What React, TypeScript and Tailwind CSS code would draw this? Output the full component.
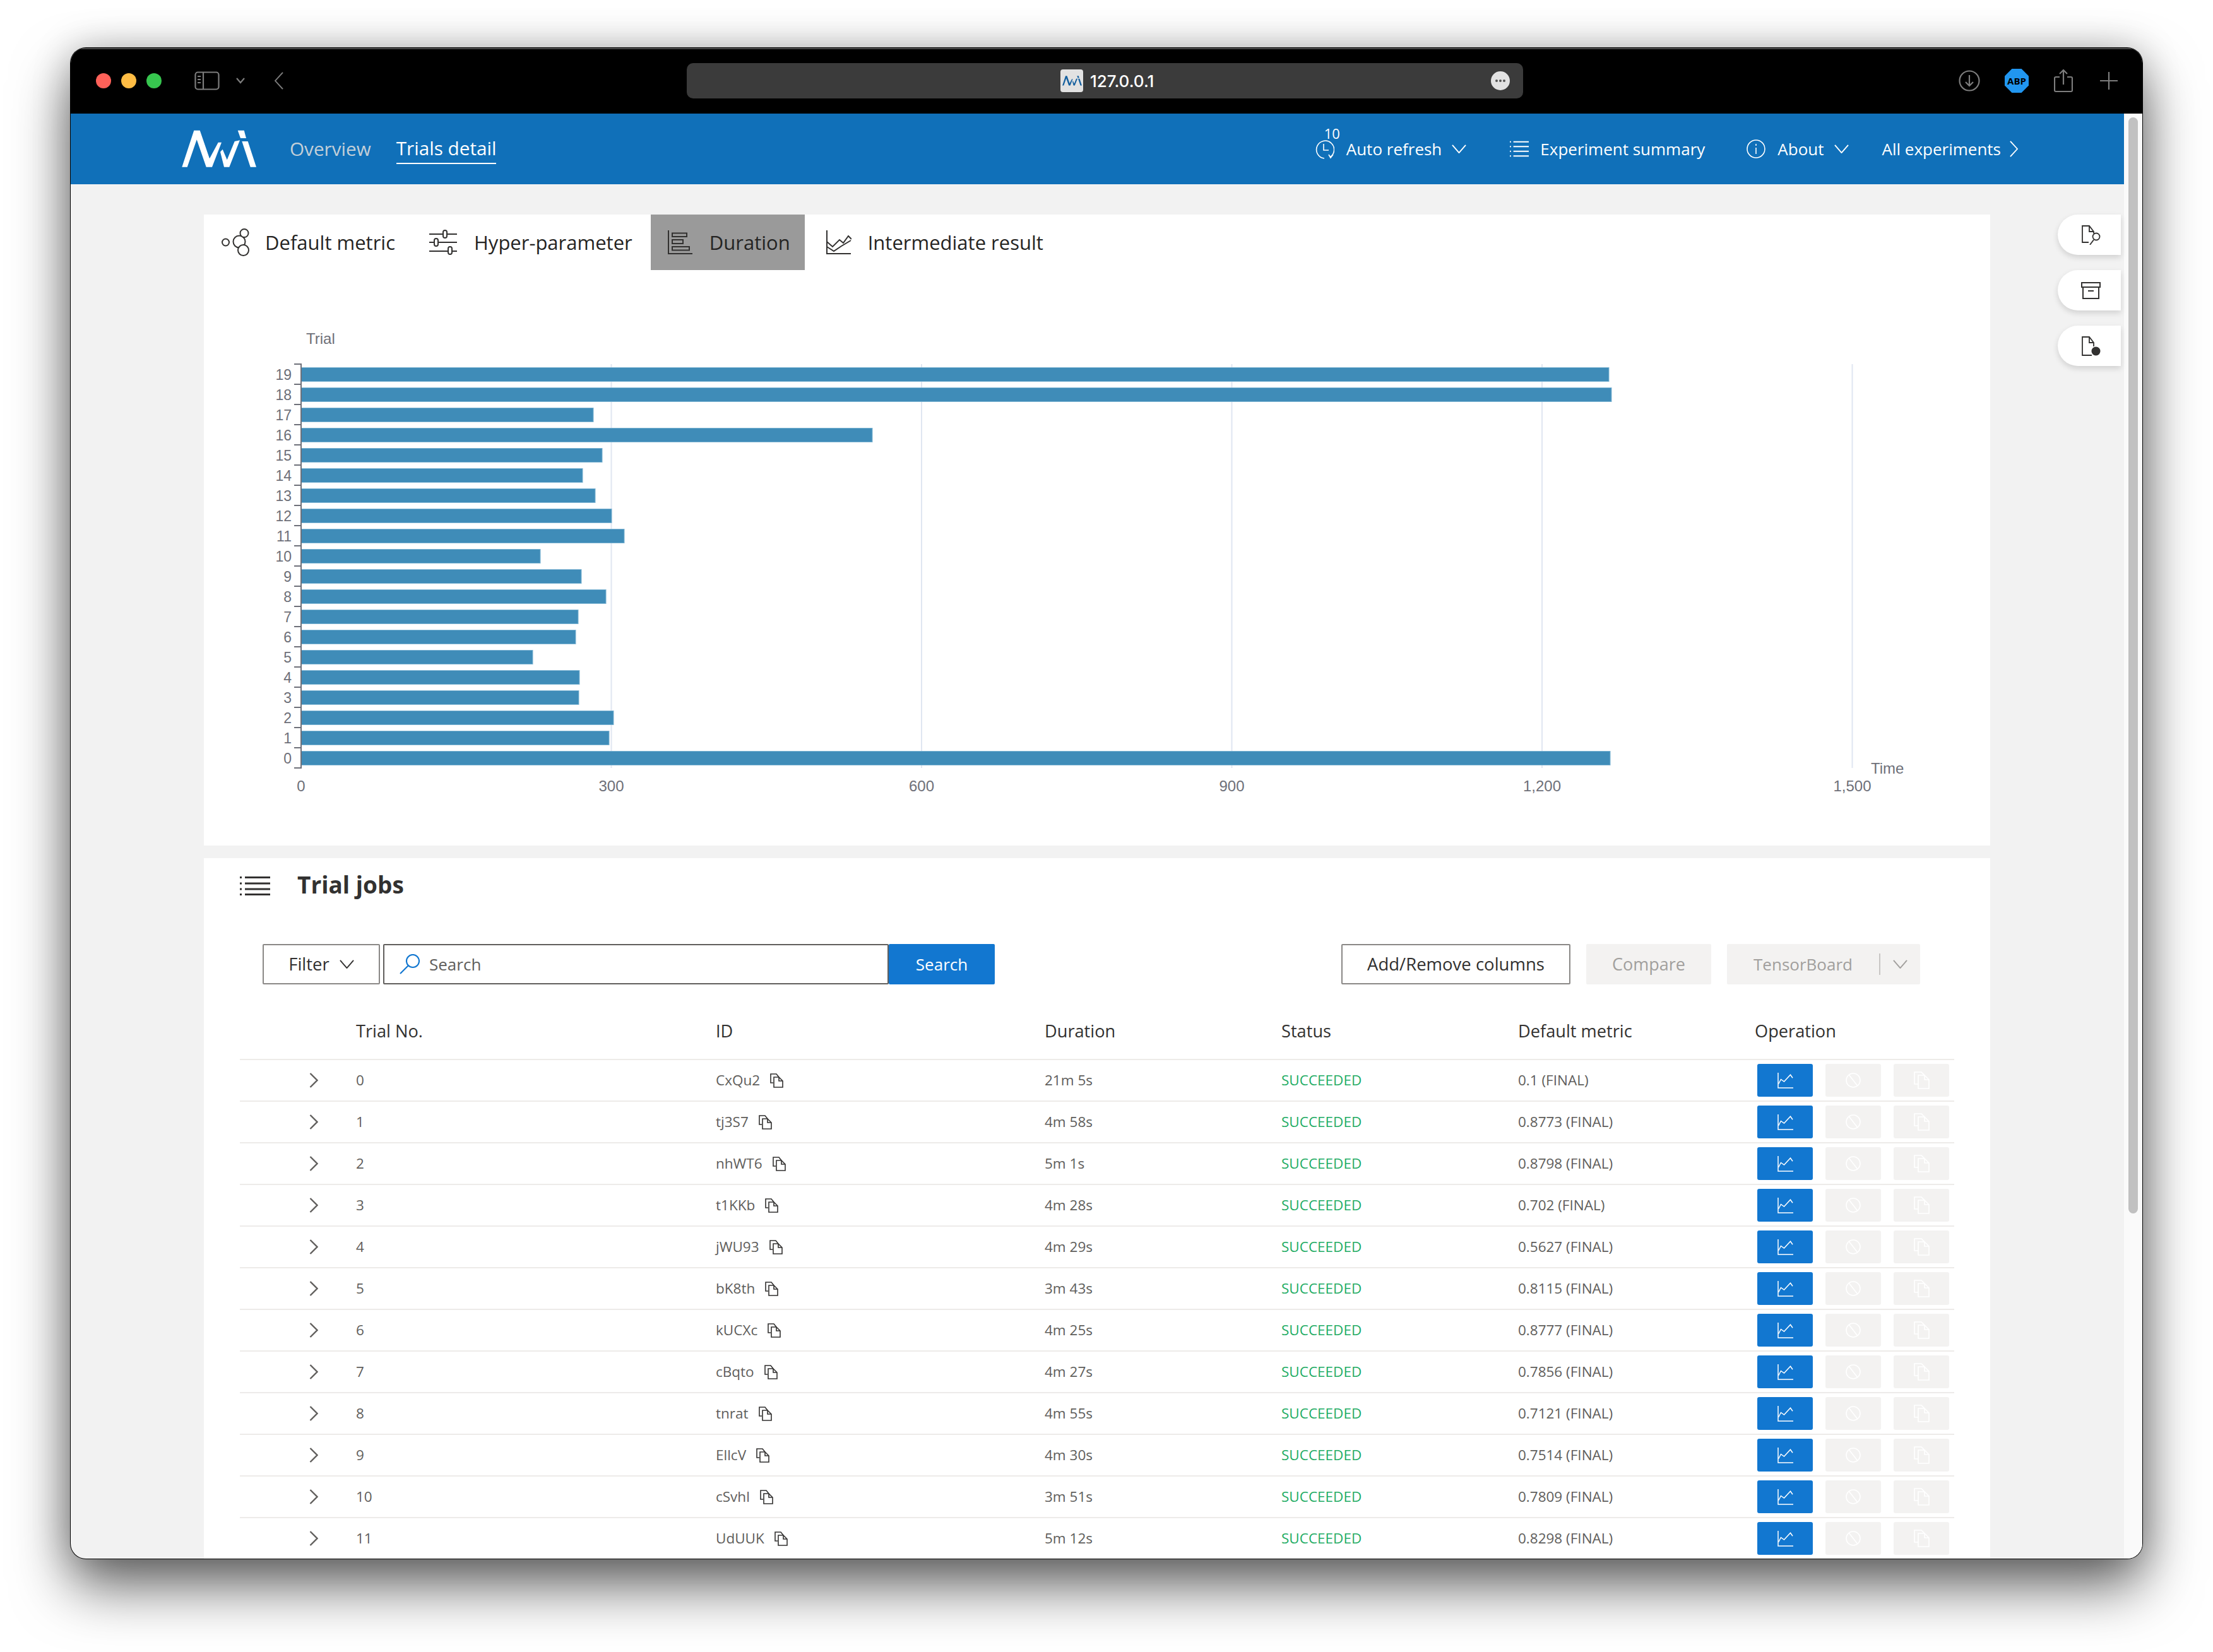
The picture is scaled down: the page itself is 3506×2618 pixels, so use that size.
const bars = [2074, 488, 495, 440, 441, 367, 435, 439, 483, 444, 379, 512, 492, 466, 446, 477, 905, 463, 2076, 2072];

const trials = [
  { id: "CxQu2", duration: "21m 5s", metric: "0.1" },
  { id: "tj3S7", duration: "4m 58s", metric: "0.8773" },
  { id: "nhWT6", duration: "5m 1s", metric: "0.8798" },
  { id: "t1KKb", duration: "4m 28s", metric: "0.702" },
  { id: "jWU93", duration: "4m 29s", metric: "0.5627" },
  { id: "bK8th", duration: "3m 43s", metric: "0.8115" },
  { id: "kUCXc", duration: "4m 25s", metric: "0.8777" },
  { id: "cBqto", duration: "4m 27s", metric: "0.7856" },
  { id: "tnrat", duration: "4m 55s", metric: "0.7121" },
  { id: "EllcV", duration: "4m 30s", metric: "0.7514" },
  { id: "cSvhl", duration: "3m 51s", metric: "0.7809" },
  { id: "UdUUK", duration: "5m 12s", metric: "0.8298" },
];

function Chevron({ dir = "down", className = "" }: { dir?: "down" | "right" | "left"; className?: string }) {
  const d = dir === "down" ? "M1 1l11 13L23 1" : dir === "right" ? "M1 1l12 14L1 29" : "M13 1L1 15l12 14";
  const box = dir === "down" ? "0 0 24 15" : "0 0 14 30";
  return (
    <svg viewBox={box} fill="none" stroke="currentColor" strokeWidth="2" preserveAspectRatio="none" className={className}>
      <path d={d} />
    </svg>
  );
}

function NniLogo({ className = "" }: { className?: string }) {
  return (
    <svg viewBox="0 0 118 60" fill="currentColor" className={className}>
      <polygon points="0.3,58.7 19.3,0.7 28.7,0.7 44,45.3 57.7,19.7 63,19.7 48,58.7 38.7,58.7 23.7,15.3 8.7,58.7" />
      <polygon points="61,34.7 64.7,30.7 71.7,47.3 83.7,18 92,16.3 75.3,58.7 67,58.7" />
      <polygon points="88.7,0.7 98.7,0.7 102,13 93,13" />
      <polygon points="95.3,18 104.7,18 118,58.7 108.7,58.7" />
    </svg>
  );
}

function CopyIcon() {
  return (
    <svg viewBox="0 0 21 23" fill="none" stroke="#323130" strokeWidth="1.6" className="h-[23px] w-[21px] shrink-0">
      <path d="M5 15H1V1h9l4 5" />
      <path d="M6 6h8l6 6v10H6z" fill="white" />
      <path d="M14 6v6h6" />
    </svg>
  );
}

function ChartIcon() {
  return (
    <svg viewBox="0 0 25 25" fill="none" stroke="white" strokeWidth="1.5" className="h-[25px] w-[25px]">
      <path d="M1 0v24h24" />
      <path d="M1.5 18l4-7.500 5 3.500 10-10.700 3.500 5" />
    </svg>
  );
}

function BlockedIcon() {
  return (
    <svg viewBox="0 0 24 24" fill="none" stroke="white" strokeWidth="1.6" className="h-[24px] w-[24px]">
      <circle cx="12" cy="12" r="11" />
      <path d="M5 3l14 18" />
    </svg>
  );
}

function DuplicateIcon() {
  return (
    <svg viewBox="0 0 25 28" fill="none" stroke="white" strokeWidth="1.6" className="h-[28px] w-[25px]">
      <path d="M7 20H1V1h11l5 5" />
      <path d="M7 6h10l7 7v14H7z" />
      <path d="M17 6v7h7" />
    </svg>
  );
}

function DurationChart() {
  const x0 = 154;
  const y0 = 73;
  const grid = [300, 600, 900, 1200, 1500];
  return (
    <svg width="2830" height="780" viewBox="0 0 2830 780" className="block" fontFamily="'Liberation Sans', sans-serif">
      <text x="162" y="41" fontSize="24" fill="#6e7079">Trial</text>
      {grid.map((v, i) => (
        <line key={v} x1={x0 + 491.5 * (i + 1)} x2={x0 + 491.5 * (i + 1)} y1={y0} y2={y0 + 640} stroke="#e0e6f1" strokeWidth="2" />
      ))}
      {bars.map((w, i) => {
        const y = y0 + 32 * (19 - i);
        return (
          <g key={i}>
            <rect x={x0} y={y + 5.5} width={w} height="22" fill="#3f8cb8" stroke="#7fb5d3" strokeWidth="1" />
            <text x={x0 - 15} y={y + 25} textAnchor="end" fontSize="23" fill="#6e7079">{i}</text>
            <line x1={x0 - 11} x2={x0} y1={y} y2={y} stroke="#6e7079" strokeWidth="2" />
          </g>
        );
      })}
      <line x1={x0 - 11} x2={x0} y1={y0 + 640} y2={y0 + 640} stroke="#6e7079" strokeWidth="2" />
      <line x1={x0} x2={x0} y1={y0 - 1} y2={y0 + 641} stroke="#6e7079" strokeWidth="2" />
      <text x={x0} y={y0 + 677} textAnchor="middle" fontSize="24" fill="#6e7079">0</text>
      {grid.map((v, i) => (
        <text key={v} x={x0 + 491.5 * (i + 1)} y={y0 + 677} textAnchor="middle" fontSize="24" fill="#6e7079">
          {v.toLocaleString("en-US")}
        </text>
      ))}
      <text x="2641" y="722" fontSize="24" fill="#6e7079">Time</text>
    </svg>
  );
}

function Tab({ label, className, icon }: { label: string; className: string; icon: React.ReactNode }) {
  return (
    <div className={`flex h-[88px] items-center text-[31px] font-medium text-[#252423] ${className}`}>
      {icon}
      <span>{label}</span>
    </div>
  );
}

function ToolButton({ children }: { children: React.ReactNode }) {
  return (
    <div className="flex h-[64px] w-[100px] items-center justify-center rounded-l-[32px] bg-white pl-[5px] shadow-[0_4px_10px_rgba(0,0,0,0.14)]">
      {children}
    </div>
  );
}

export default function App() {
  return (
    <div className="h-[2618px] w-[3506px] overflow-hidden bg-white pl-[112px] pt-[76px] font-['Open_Sans',sans-serif]">
      <div className="relative flex h-[2394px] w-[3282px] flex-col overflow-hidden rounded-[24px] bg-[#f2f2f2] shadow-[0_0_0_1px_#000,0_44px_90px_rgba(0,0,0,0.6),0_0_60px_rgba(0,0,0,0.22)]">
        {/* browser toolbar */}
        <div className="flex h-[104px] shrink-0 items-center border-t-2 border-[#4a4a4a] bg-black pb-[2px]">
          <div className="ml-[40px] flex gap-[16px]">
            <span className="h-[24px] w-[24px] rounded-full bg-[#ff6159]" />
            <span className="h-[24px] w-[24px] rounded-full bg-[#ffbd44]" />
            <span className="h-[24px] w-[24px] rounded-full bg-[#37c64f]" />
          </div>
          <svg viewBox="0 0 40 30" fill="none" stroke="#7d7d7d" strokeWidth="2.2" className="ml-[52px] h-[30px] w-[40px]">
            <rect x="1.5" y="1.5" width="37" height="27" rx="4" />
            <path d="M14 2v26M5 8h5M5 13h5M5 18h5" />
          </svg>
          <svg viewBox="0 0 14 10" fill="none" stroke="#7d7d7d" strokeWidth="2.2" className="ml-[26px] h-[10px] w-[14px]">
            <path d="M1 1l6 7 6-7" />
          </svg>
          <Chevron dir="left" className="ml-[47px] h-[28px] w-[14px] text-[#7d7d7d]" />
          <div className="ml-[639px] flex h-[56px] w-[1325px] items-center rounded-[10px] bg-[#3b3b3b]">
            <div className="ml-[592px] flex h-[36px] w-[36px] items-center justify-center rounded-[4px] bg-[#e2e2e2]">
              <NniLogo className="h-[18px] w-[31px] text-[#15609f]" />
            </div>
            <span className="ml-[11px] font-['Inter',sans-serif] text-[26px] font-medium text-white">127.0.0.1</span>
            <div className="ml-auto mr-[21px] flex h-[30px] w-[30px] items-center justify-center gap-[2px] rounded-full bg-[#e2e2e2]">
              <span className="h-[4px] w-[4px] rounded-full bg-[#555]" />
              <span className="h-[4px] w-[4px] rounded-full bg-[#555]" />
              <span className="h-[4px] w-[4px] rounded-full bg-[#555]" />
            </div>
          </div>
          <svg viewBox="0 0 34 34" fill="none" stroke="#7d7d7d" strokeWidth="2.2" className="ml-[690px] h-[34px] w-[34px]">
            <circle cx="17" cy="17" r="15.5" />
            <path d="M17 8v17M11 19l6 6 6-6" />
          </svg>
          <div className="ml-[39px] flex h-[38px] w-[38px] items-center justify-center bg-[#2196f0] text-[15px] font-bold text-black [clip-path:polygon(30%_0,70%_0,100%_30%,100%_70%,70%_100%,30%_100%,0_70%,0_30%)]">
            ABP
          </div>
          <svg viewBox="0 0 30 38" fill="none" stroke="#7d7d7d" strokeWidth="2.2" className="ml-[40px] h-[38px] w-[30px]">
            <path d="M9 13H3a2 2 0 00-2 2v19a2 2 0 002 2h24a2 2 0 002-2V15a2 2 0 00-2-2h-6M15 25V2M9 8l6-6 6 6" />
          </svg>
          <svg viewBox="0 0 28 28" fill="none" stroke="#7d7d7d" strokeWidth="2.2" className="ml-[43px] h-[28px] w-[28px]">
            <path d="M14 0v28M0 14h28" />
          </svg>
        </div>

        <div className="flex min-h-0 flex-1">
          <div className="relative flex min-w-0 flex-1 flex-col">
            {/* app nav */}
            <div className="flex h-[112px] shrink-0 items-center bg-[#1070b9] text-white">
              <NniLogo className="ml-[176px] h-[60px] w-[118px] text-white" />
              <span className="ml-[53px] text-[29.7px] text-[#c3cfd8]">Overview</span>
              <span className="ml-[40px] border-b-2 border-white pt-[1px] text-[29.7px]">Trials detail</span>
              <div className="ml-auto flex items-center pr-[168px] text-[26px]">
                <div className="relative h-[32px] w-[32px]">
                  <span className="absolute left-[16px] top-[-20px] text-[22px] leading-none">10</span>
                  <svg viewBox="0 0 32 32" fill="none" stroke="currentColor" strokeWidth="1.6" className="h-[32px] w-[32px]">
                    <path d="M25 29a14 14 0 10-9 2M15 8v10h8M23 25l3 5 4-5" />
                  </svg>
                </div>
                <span className="ml-[19px]">Auto refresh</span>
                <Chevron className="ml-[16px] h-[14px] w-[23px]" />
                <svg viewBox="0 0 32 26" fill="none" stroke="currentColor" strokeWidth="2" className="ml-[69px] h-[26px] w-[30px]">
                  <path d="M6 1h26M6 9h26M6 17h26M6 25h26M0 1h2M0 9h2M0 17h2M0 25h2" />
                </svg>
                <span className="ml-[18px]">Experiment summary</span>
                <svg viewBox="0 0 30 30" fill="none" stroke="currentColor" strokeWidth="1.6" className="ml-[66px] h-[30px] w-[30px]">
                  <circle cx="15" cy="15" r="14" />
                  <path d="M15 13v10M15 7v3" />
                </svg>
                <span className="ml-[19px]">About</span>
                <Chevron className="ml-[16px] h-[14px] w-[23px]" />
                <span className="ml-[53px]">All experiments</span>
                <Chevron dir="right" className="ml-[14px] h-[26px] w-[13px]" />
              </div>
            </div>

            <div className="flex min-h-0 flex-1 flex-col pl-[211px] pr-[212px] pt-[48px]">
              {/* duration chart */}
              <div className="h-[1000px] shrink-0 bg-white">
                <div className="flex">
                  <Tab
                    className="gap-[25px] pl-[28px] pr-[27px]"
                    label="Default metric"
                    icon={
                      <svg viewBox="0 0 44 44" fill="none" stroke="#323130" strokeWidth="2" className="h-[44px] w-[44px]">
                        <circle cx="6.500" cy="22" r="5.500" />
                        <circle cx="28" cy="21" r="9.500" />
                        <circle cx="36" cy="7.500" r="6.500" fill="white" />
                        <circle cx="34.500" cy="34.500" r="8.500" fill="white" />
                      </svg>
                    }
                  />
                  <Tab
                    className="mr-[2px] gap-[27px] pl-[27px] pr-[27px]"
                    label="Hyper-parameter"
                    icon={
                      <svg viewBox="0 0 44 40" fill="none" stroke="#323130" strokeWidth="2" className="h-[40px] w-[44px]">
                        <path d="M0 7h44M0 20h44M0 34h44" />
                        <rect x="22" y="1" width="6" height="12" rx="3" fill="white" />
                        <rect x="8" y="14" width="6" height="12" rx="3" fill="white" />
                        <rect x="30" y="27" width="6" height="12" rx="3" fill="white" />
                      </svg>
                    }
                  />
                  <Tab
                    className="gap-[27px] bg-[#9a9a9a] pl-[27px] pr-[23px]"
                    label="Duration"
                    icon={
                      <svg viewBox="0 0 39 38" fill="none" stroke="#323130" strokeWidth="2" className="h-[38px] w-[39px]">
                        <path d="M1 0v37h38" />
                        <rect x="7" y="4.500" width="23" height="5.500" />
                        <rect x="7" y="15" width="17" height="6" />
                        <rect x="7" y="26" width="27" height="5.500" />
                      </svg>
                    }
                  />
                  <Tab
                    className="gap-[26px] pl-[34px]"
                    label="Intermediate result"
                    icon={
                      <svg viewBox="0 0 40 38" fill="none" stroke="#323130" strokeWidth="2" className="h-[38px] w-[40px]">
                        <path d="M1 0v37h38" />
                        <path d="M1 18l9 8 11-11 6 5 8-11 5 5" />
                        <path d="M1 26l11 7 12-8 15-9" />
                      </svg>
                    }
                  />
                </div>
                <div className="pt-[76px]">
                  <DurationChart />
                </div>
              </div>

              {/* trial jobs */}
              <div className="mt-[20px] flex-1 bg-white">
                <div className="flex h-[88px] items-center pl-[57px]">
                  <svg viewBox="0 0 48 30" fill="none" stroke="#323130" strokeWidth="3" className="h-[30px] w-[48px]">
                    <path d="M8 1.500h40M8 11h40M8 20h40M8 28.500h40M0 1.500h3M0 11h3M0 20h3M0 28.500h3" />
                  </svg>
                  <span className="ml-[43px] pb-[4px] text-[37px] font-bold text-[#323130]">Trial jobs</span>
                </div>

                <div className="mt-[48px] flex h-[64px] items-stretch pl-[93px] text-[26px]">
                  <div className="flex w-[186px] items-center justify-center gap-[16px] rounded-[2px] border-2 border-[#8a8886] text-[27.5px] font-medium text-[#323130]">
                    Filter
                    <Chevron className="h-[14px] w-[23px]" />
                  </div>
                  <div className="ml-[5px] flex w-[801px] items-center rounded-[2px] border-2 border-[#605e5c] pl-[24px] text-[#605e5c]">
                    <svg viewBox="0 0 32 32" fill="none" stroke="#1277d0" strokeWidth="2.2" className="h-[32px] w-[32px]">
                      <circle cx="21" cy="11" r="10" />
                      <path d="M14 18L1 31" />
                    </svg>
                    <span className="ml-[15px]">Search</span>
                  </div>
                  <div className="flex w-[168px] items-center justify-center rounded-[2px] bg-[#1277d0] font-medium text-white">Search</div>
                  <div className="ml-[549px] flex w-[363px] items-center justify-center rounded-[2px] border-2 border-[#8a8886] text-[27.5px] font-medium text-[#323130]">
                    Add/Remove columns
                  </div>
                  <div className="ml-[25px] flex w-[198px] items-center justify-center rounded-[2px] bg-[#f3f2f1] text-[27px] font-medium text-[#a19f9d]">Compare</div>
                  <div className="ml-[25px] flex w-[306px] items-center rounded-[2px] bg-[#f3f2f1] font-medium text-[#a19f9d]">
                    <span className="flex w-[241px] justify-center">TensorBoard</span>
                    <span className="h-[34px] w-[2px] bg-[#c8c6c4]" />
                    <Chevron className="ml-[20px] h-[14px] w-[23px]" />
                  </div>
                </div>

                <div className="ml-[57px] mr-[57px] mt-[40px]">
                  <div className="grid h-[80px] grid-cols-[184px_570px_521px_375px_375px_375px_1fr] items-center border-b-2 border-[#edebe9] pb-[10px] text-[27.2px] font-medium text-[#323130]">
                    <span />
                    <span>Trial No.</span>
                    <span>ID</span>
                    <span>Duration</span>
                    <span>Status</span>
                    <span>Default metric</span>
                    <span>Operation</span>
                  </div>
                  {trials.map((trial, i) => (
                    <div
                      key={trial.id}
                      className="grid h-[66px] grid-cols-[184px_570px_521px_375px_375px_375px_1fr] items-center border-b-2 border-[#edebe9] text-[22.5px] text-[#605e5c]"
                    >
                      <span className="pl-[110px]">
                        <svg viewBox="0 0 14 24" fill="none" stroke="#605e5c" strokeWidth="2.400" className="h-[24px] w-[14px]">
                          <path d="M1.500 1l11 11-11 11" />
                        </svg>
                      </span>
                      <span>{i}</span>
                      <span className="flex items-center gap-[16px]">
                        {trial.id}
                        <CopyIcon />
                      </span>
                      <span>{trial.duration}</span>
                      <span className="text-[#22ac64]">SUCCEEDED</span>
                      <span>{trial.metric} (FINAL)</span>
                      <span className="flex gap-[20px] pl-[4px]">
                        <span className="flex h-[52px] w-[88px] items-center justify-center rounded-[3px] bg-[#1277d0]">
                          <ChartIcon />
                        </span>
                        <span className="flex h-[52px] w-[88px] items-center justify-center rounded-[3px] bg-[#f3f2f1]">
                          <BlockedIcon />
                        </span>
                        <span className="flex h-[52px] w-[88px] items-center justify-center rounded-[3px] bg-[#f3f2f1]">
                          <DuplicateIcon />
                        </span>
                      </span>
                    </div>
                  ))}
                </div>
              </div>
            </div>

            {/* floating side actions */}
            <div className="absolute right-[5px] top-[160px] flex flex-col gap-[24px]">
              <ToolButton>
                <svg viewBox="0 0 31 31" fill="none" stroke="#323130" strokeWidth="1.800" className="h-[31px] w-[31px]">
                  <path d="M12 27H2V1h11l7 9v3M13 1v9h7" />
                  <circle cx="24" cy="18" r="5.500" />
                  <path d="M20 23l-6 8" />
                </svg>
              </ToolButton>
              <ToolButton>
                <svg viewBox="0 0 31 27" fill="none" stroke="#323130" strokeWidth="2" className="h-[27px] w-[31px]">
                  <path d="M1 1h29v7H1zM3 8v18h25V8M11 14h9" />
                </svg>
              </ToolButton>
              <ToolButton>
                <svg viewBox="0 0 31 31" fill="none" stroke="#323130" strokeWidth="1.800" className="h-[31px] w-[31px]">
                  <path d="M17 30H2V1h11l7 9v6M13 1v9h7" />
                  <circle cx="23.500" cy="23.500" r="7" fill="#323130" stroke="none" />
                </svg>
              </ToolButton>
            </div>
          </div>
          <div className="w-[29px] shrink-0 bg-[#fafafa] pl-[7px] pt-[6px]">
            <div className="h-[1737px] w-[15px] rounded-full bg-[#c1c1c1]" />
          </div>
        </div>
      </div>
    </div>
  );
}
